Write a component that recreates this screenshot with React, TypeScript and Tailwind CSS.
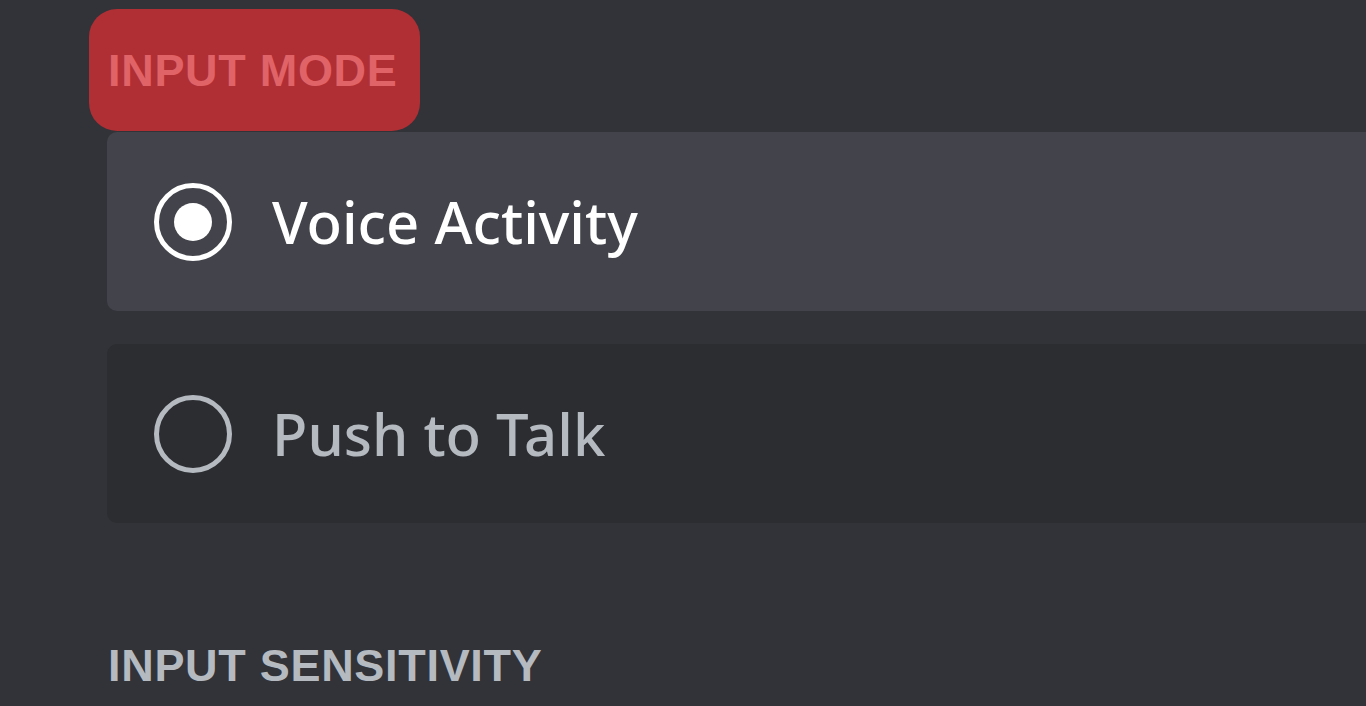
export default function App() {
  const body = { fontFamily: '"Noto Sans", "Open Sans", sans-serif' };
  const head = { fontFamily: '"Liberation Sans", Arial, sans-serif' };
  return (
    <div className="w-[1366px] h-[706px] overflow-hidden bg-[#313338]">
      <div className="pt-[9px] pl-[89px]">
        <div className="w-[331px] h-[122px] rounded-[28px] bg-[#af2f34] flex items-center pl-[19px]">
          <div style={head} className="text-[#e06368] text-[45px] font-bold tracking-[0.7px] leading-none whitespace-nowrap">INPUT MODE</div>
        </div>
      </div>
      <div className="pl-[107px] mt-[1px] flex flex-col gap-[33px]">
        <div className="w-[1400px] h-[179px] rounded-[10px] bg-[#43444b] flex items-center">
          <div className="ml-[47px] w-[78px] h-[78px] rounded-full border-[5px] border-white flex items-center justify-center">
            <div className="w-[38px] h-[38px] rounded-full bg-white" />
          </div>
          <div style={body} className="ml-[40px] text-white text-[58px] font-medium leading-none">Voice Activity</div>
        </div>
        <div className="w-[1400px] h-[179px] rounded-[10px] bg-[#2b2d31] flex items-center">
          <div className="ml-[47px] w-[78px] h-[78px] rounded-full border-[5px] border-[#b5bac1]" />
          <div style={body} className="ml-[40px] text-[#b5bac1] text-[58px] font-medium leading-none">Push to Talk</div>
        </div>
      </div>
      <div style={head} className="ml-[108px] mt-[120px] text-[#b5bac1] text-[45px] font-bold tracking-[0.7px] leading-none whitespace-nowrap">INPUT SENSITIVITY</div>
    </div>
  );
}
